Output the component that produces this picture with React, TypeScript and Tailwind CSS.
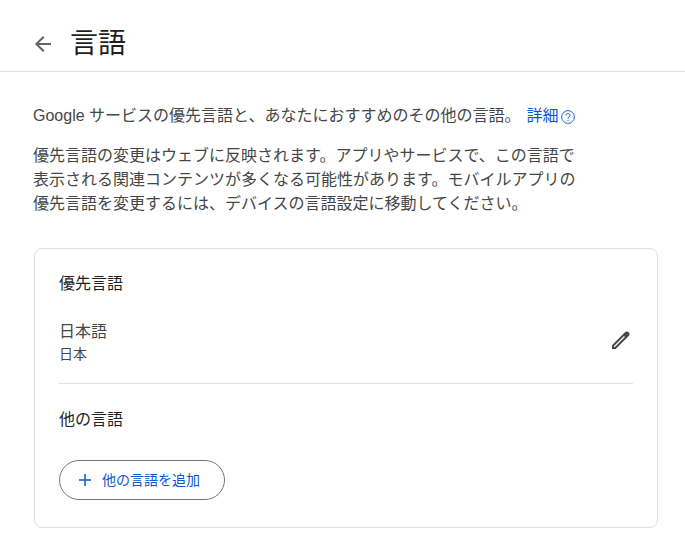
const jp = "font-['Liberation_Sans','Noto_Sans_CJK_JP',sans-serif]";

function BackIcon() {
  return (
    <svg width="24" height="24" viewBox="0 0 24 24" fill="#5f6368">
      <path d="M20 11H7.83l5.59-5.59L12 4l-8 8 8 8 1.41-1.41L7.83 13H20v-2z" />
    </svg>
  );
}

function HelpIcon() {
  return (
    <svg width="16" height="16" viewBox="0 0 24 24" fill="none" stroke="#0b57d0" strokeWidth="1.4" className="ml-[2px] mt-[1px]">
      <circle cx="12" cy="12" r="9.6" />
      <path d="M9 9.6c0-1.7 1.3-3 3-3s3 1.3 3 3c0 2.4-3 2.3-3 5.2" />
      <path d="M12 16.4v1.6" />
    </svg>
  );
}

function EditIcon() {
  return (
    <svg width="24" height="24" viewBox="0 0 24 24" fill="#444746" className="mb-[4px]">
      <path
        fillRule="evenodd"
        d="M3 21v-3.75L16.2 4.1c.9-.9 2.3-.9 3.2 0l.5.5c.9.9.9 2.3 0 3.2L6.75 21H3zM5 19h.9L15.9 9l-.9-.9L5 18.1V19z"
      />
    </svg>
  );
}

function PlusIcon() {
  return (
    <svg width="18" height="18" viewBox="0 0 24 24" fill="#0b57d0">
      <path d="M20 13h-7v7h-2v-7H4v-2h7V4h2v7h7v2z" />
    </svg>
  );
}

export default function App() {
  return (
    <div className={`min-h-[537px] bg-white ${jp} overflow-hidden`}>
      {/* ヘッダー */}
      <header className="h-[72px] border-b border-[#e0e0e0] flex items-center pl-[31px] pt-[16px]">
        <BackIcon />
        <h1 className="ml-[15px] text-[28px] leading-9 text-[#1f1f1f]">言語</h1>
      </header>

      <main className="pl-[33px] pr-[27px]">
        <p className="mt-[32px] text-base leading-6 text-[#444746] flex items-center">
          Google サービスの優先言語と、あなたにおすすめのその他の言語。
          <a className="ml-[6px] text-[#0b57d0]">詳細</a>
          <HelpIcon />
        </p>
        <p className="mt-[16px] text-base leading-6 text-[#444746] whitespace-nowrap">
          優先言語の変更はウェブに反映されます。アプリやサービスで、この言語で
          <br />
          表示される関連コンテンツが多くなる可能性があります。モバイルアプリの
          <br />
          優先言語を変更するには、デバイスの言語設定に移動してください。
        </p>

        {/* カード */}
        <section className="mt-[32px] ml-[1px] h-[280px] border border-[#e0e0e0] rounded-lg px-6">
          <h2 className="mt-[23px] text-base leading-6 text-[#1f1f1f]">優先言語</h2>
          <div className="mt-[24px] flex items-center justify-between">
            <div>
              <div className="text-base leading-6 text-[#444746]">日本語</div>
              <div className="text-sm leading-5 text-[#444746]">日本</div>
            </div>
            <EditIcon />
          </div>
          <div className="mt-[19px] border-t border-[#e0e0e0]" />
          <h2 className="mt-[24px] text-base leading-6 text-[#1f1f1f]">他の言語</h2>
          <button className="mt-[28px] w-[166px] h-[40px] rounded-full border border-[#747775] flex items-center pl-[16px] text-sm text-[#0b57d0]">
            <PlusIcon />
            <span className="ml-[8px]">他の言語を追加</span>
          </button>
        </section>
      </main>
    </div>
  );
}
